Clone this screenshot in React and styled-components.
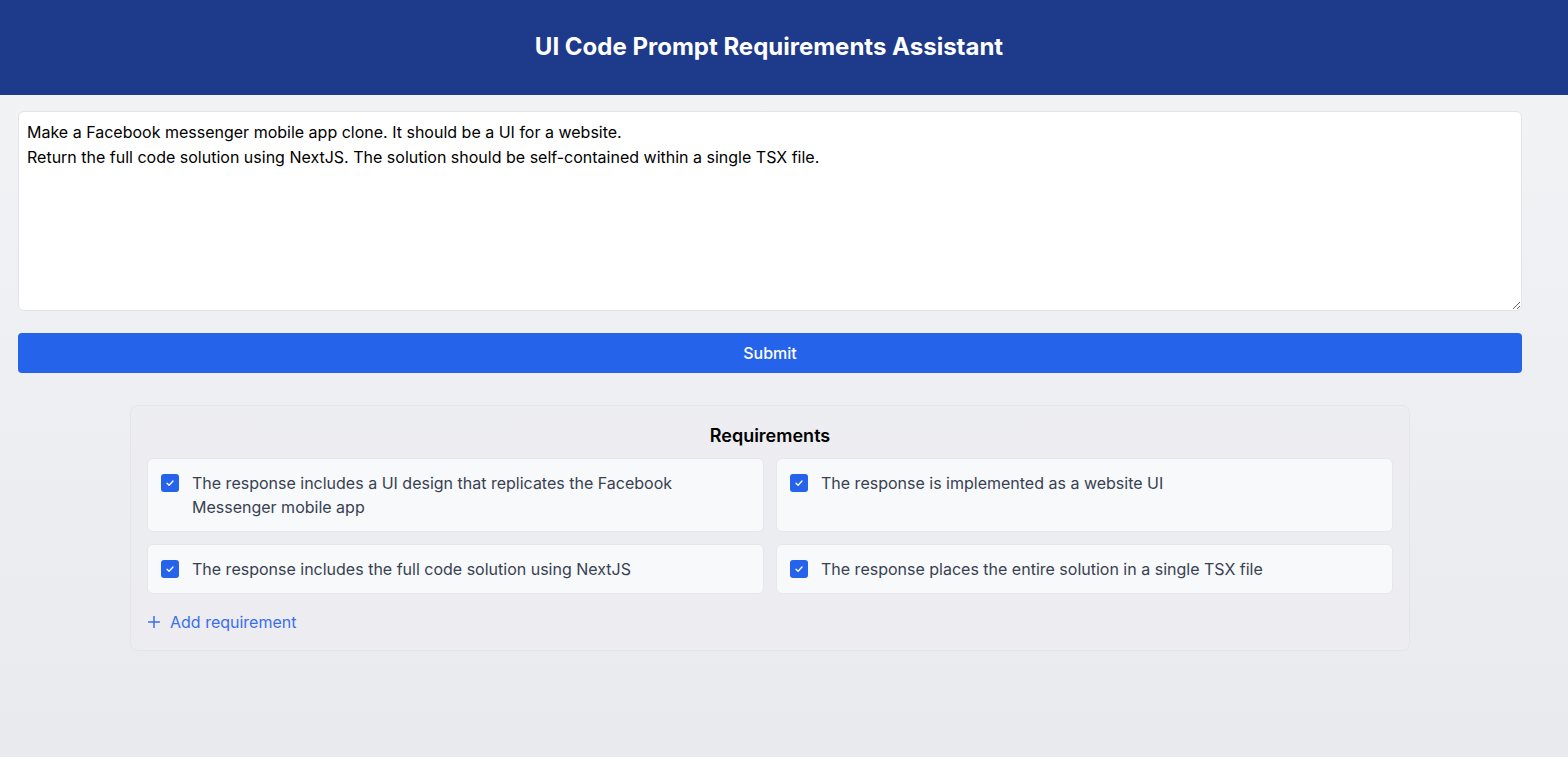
import React, { useState } from "react"
import styled, { createGlobalStyle } from "styled-components"

const GlobalStyle = createGlobalStyle`
  html, body {
    margin: 0;
    padding: 0;
  }
  body {
    font-family: Inter, "Noto Sans", sans-serif;
    background: linear-gradient(180deg, #f3f4f6 0%, #e9eaee 100%);
    min-height: 757px;
    color: #111827;
  }
  * { box-sizing: border-box; }
`

const Page = styled.div`
  min-height: 757px;
  display: flex;
  flex-direction: column;
`

const Header = styled.header`
  height: 95px;
  padding-right: 30px;
  background: #1e3a8a;
  display: flex;
  align-items: center;
  justify-content: center;
`

const Title = styled.h1`
  margin: 0;
  color: #ffffff;
  font-size: 24px;
  font-weight: 700;
  line-height: 32px;
  transform: translateY(-1px);
`

const Main = styled.main`
  display: flex;
  flex-direction: column;
  padding: 16px 46px 40px 18px;
`

const PromptInput = styled.textarea`
  width: 100%;
  height: 200px;
  padding: 8px;
  font-family: Inter, "Noto Sans", sans-serif;
  font-size: 16px;
  line-height: 25px;
  color: #000;
  background: #fff;
  border: 1px solid #e2e4e9;
  border-radius: 6px;
  outline: none;
  resize: vertical;
  display: block;
`

const SubmitButton = styled.button`
  margin-top: 22px;
  height: 40px;
  width: 100%;
  border: none;
  border-radius: 4px;
  background: #2563eb;
  color: #fff;
  font-family: Inter, "Noto Sans", sans-serif;
  font-size: 16px;
  font-weight: 500;
  cursor: pointer;
`

const Panel = styled.section`
  margin: 32px auto 0;
  width: 100%;
  max-width: 1280px;
  padding: 16px;
  border: 1px solid #e3e5ea;
  border-radius: 8px;
  background: rgba(236, 237, 241, 0.6);
`

const PanelTitle = styled.h2`
  margin: 0 0 8px;
  text-align: center;
  font-size: 18px;
  line-height: 28px;
  font-weight: 600;
  color: #000;
`

const Grid = styled.div`
  display: grid;
  grid-template-columns: 1fr 1fr;
  gap: 12px;
`

const Card = styled.label`
  display: flex;
  align-items: flex-start;
  gap: 13px;
  padding: 12px 12px 12px 13px;
  background: #f8f9fb;
  border: 1px solid #e5e7eb;
  border-radius: 6px;
  cursor: pointer;
`

const Box = styled.span`
  flex: none;
  width: 18px;
  height: 18px;
  margin-top: 3px;
  border-radius: 3px;
  background: ${p => (p.checked ? "#2563eb" : "#fff")};
  border: ${p => (p.checked ? "none" : "1px solid #9ca3af")};
  display: flex;
  align-items: center;
  justify-content: center;
`

const CardText = styled.span`
  font-size: 16px;
  line-height: 24px;
  color: #374151;
`

const AddButton = styled.button`
  margin-top: 16px;
  display: flex;
  align-items: center;
  gap: 10px;
  padding: 0 0 0 1px;
  border: none;
  background: none;
  color: #3b6fe8;
  font-family: Inter, "Noto Sans", sans-serif;
  font-size: 16px;
  line-height: 24px;
  cursor: pointer;
`

const requirements = [
  "The response includes a UI design that replicates the Facebook Messenger mobile app",
  "The response is implemented as a website UI",
  "The response includes the full code solution using NextJS",
  "The response places the entire solution in a single TSX file",
]

const prompt =
  "Make a Facebook messenger mobile app clone. It should be a UI for a website.\nReturn the full code solution using NextJS. The solution should be self-contained within a single TSX file."

export default function App() {
  const [text, setText] = useState(prompt)
  const [checked, setChecked] = useState(requirements.map(() => true))

  const toggle = i => setChecked(c => c.map((v, j) => (j === i ? !v : v)))

  return (
    <Page>
      <GlobalStyle />
      <Header>
        <Title>UI Code Prompt Requirements Assistant</Title>
      </Header>
      <Main>
        <PromptInput value={text} onChange={e => setText(e.target.value)} />
        <SubmitButton>Submit</SubmitButton>
        <Panel>
          <PanelTitle>Requirements</PanelTitle>
          <Grid>
            {requirements.map((r, i) => (
              <Card key={i} onClick={() => toggle(i)}>
                <Box checked={checked[i]}>
                  {checked[i] && (
                    <svg width="10" height="10" viewBox="0 0 10 10" fill="none">
                      <path d="M2 5.2 L4.1 7.2 L8 3" stroke="#fff" strokeWidth="1.3" strokeLinecap="round" strokeLinejoin="round" />
                    </svg>
                  )}
                </Box>
                <CardText>{r}</CardText>
              </Card>
            ))}
          </Grid>
          <AddButton>
            <svg width="12" height="12" viewBox="0 0 12 12" fill="none">
              <path d="M6 0.5 V11.5 M0.5 6 H11.5" stroke="#3b6fe8" strokeWidth="1.5" strokeLinecap="round" />
            </svg>
            Add requirement
          </AddButton>
        </Panel>
      </Main>
    </Page>
  )
}
